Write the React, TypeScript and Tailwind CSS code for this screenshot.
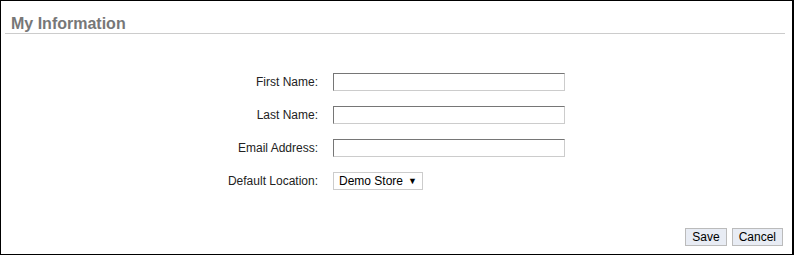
export default function App() {
  const fields = ["First Name:", "Last Name:", "Email Address:"];

  return (
    <div
      className="w-[794px] h-[255px] border border-r-2 border-black bg-white flex flex-col text-[12px] text-[#222]"
      style={{ fontFamily: '"Liberation Sans", Arial, sans-serif' }}>
      {/* Title bar */}
      <div className="ml-[4px] mr-[7px] pl-[6px] pt-[14px] pb-0 border-b border-[#cccccc]">
        <h1 className="text-[16px] leading-[18px] font-bold text-[#777777]">My Information</h1>
      </div>

      {/* Form */}
      <div className="mt-[39px] flex flex-col gap-[15px]">
        {fields.map((label) => (
          <div key={label} className="flex items-center">
            <label className="w-[317px] text-right leading-[18px]">{label}</label>
            <input
              type="text"
              className="ml-[15px] w-[232px] h-[18px] bg-white border border-t-[#767676] border-l-[#767676] border-r-[#cccccc] border-b-[#cccccc] outline-none"
            />
          </div>
        ))}
        <div className="flex items-center">
          <label className="w-[317px] text-right leading-[18px]">Default Location:</label>
          <div className="ml-[15px] w-[90px] h-[18px] border border-[#cccccc] bg-white flex items-center pl-[5px] gap-[5px] leading-none text-[12px] text-black">
            <span>Demo Store</span>
            <span className="text-[9px]">▼</span>
          </div>
        </div>
      </div>

      {/* Actions */}
      <div className="flex-1 flex items-end justify-end gap-[5px] pr-[9px] pb-[8px]">
        <button className="h-[18px] px-[6px] border border-[#bbbbbb] bg-[#e8ecf4] text-black text-[12px] leading-none">
          Save
        </button>
        <button className="h-[18px] px-[6px] border border-[#bbbbbb] bg-[#e8ecf4] text-black text-[12px] leading-none">
          Cancel
        </button>
      </div>
    </div>
  );
}
